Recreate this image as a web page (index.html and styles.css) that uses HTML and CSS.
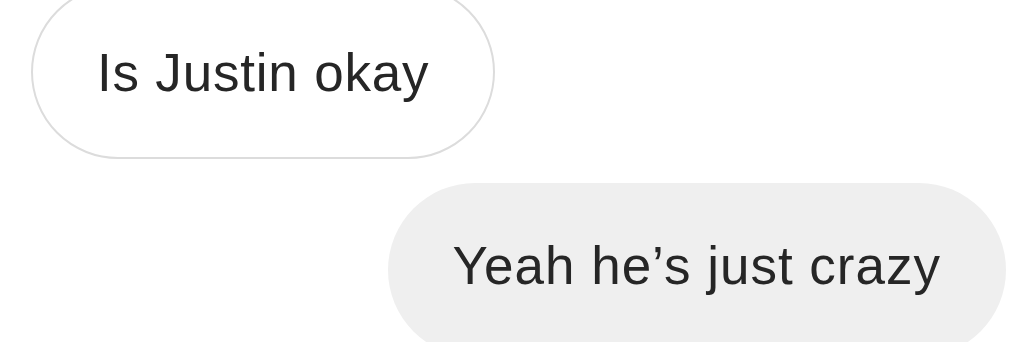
FILE: index.html
```html
<!DOCTYPE html>
<html lang="en">
<head>
    <meta charset="UTF-8">
    <meta name="viewport" content="width=device-width, initial-scale=1.0">
    <title>Messages</title>
    <link rel="stylesheet" href="styles.css">
</head>
<body>
    <div class="thread">
        <div class="message incoming">
            <div class="bubble">Is Justin okay</div>
        </div>
        <div class="message outgoing">
            <div class="bubble">Yeah he’s just crazy</div>
        </div>
    </div>
</body>
</html>
```

FILE: styles.css
```css
* {
    margin: 0;
    padding: 0;
    box-sizing: border-box;
}

body {
    font-family: "Liberation Sans", Arial, Helvetica, sans-serif;
    background: #ffffff;
    color: #262626;
    width: 1028px;
    height: 342px;
    overflow: hidden;
}

.thread {
    display: flex;
    flex-direction: column;
    gap: 24px;
    margin-top: -15px;
}

.message {
    display: flex;
}

.message.incoming {
    justify-content: flex-start;
    padding-left: 31px;
}

.message.outgoing {
    justify-content: flex-end;
    padding-right: 22px;
}

.bubble {
    display: flex;
    align-items: center;
    height: 174px;
    padding: 0 65px;
    border-radius: 87px;
    font-size: 53px;
    letter-spacing: 0.8px;
    white-space: nowrap;
}

.incoming .bubble {
    background: #ffffff;
    border: 2px solid #dcdcdc;
    padding: 0 64px;
}

.outgoing .bubble {
    background: #efefef;
    letter-spacing: 1px;
    padding: 0 65px 10px;
}
```
